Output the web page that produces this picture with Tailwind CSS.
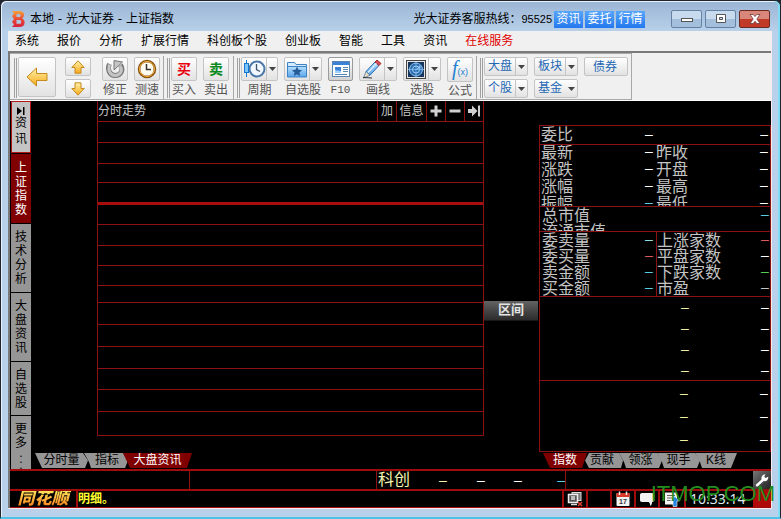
<!DOCTYPE html>
<html lang="zh-CN">
<head>
<meta charset="utf-8">
<meta name="viewport" content="width=device-width, initial-scale=1">
<title>本地 - 光大证券 - 上证指数</title>
<script src="https://cdn.jsdelivr.net/npm/@tailwindcss/browser@4"></script>
</head>
<body class="h-screen overflow-hidden bg-[#20242c] font-['Liberation_Sans','Noto_Sans_CJK_SC',sans-serif] text-xs leading-4 text-black">
<svg class="absolute h-0 w-0" aria-hidden="true">
  <defs>
    <linearGradient id="gold" x1="0" y1="0" x2="0" y2="1"><stop offset="0" stop-color="#fff2a8"/><stop offset="1" stop-color="#f7a91c"/></linearGradient>
    <linearGradient id="sky" x1="0" y1="0" x2="0" y2="1"><stop offset="0" stop-color="#b5defc"/><stop offset="1" stop-color="#5ba6ea"/></linearGradient>
    <linearGradient id="flame" x1="0" y1="0" x2="0" y2="1"><stop offset="0" stop-color="#f5a23a"/><stop offset=".5" stop-color="#ea4a35"/><stop offset="1" stop-color="#d8213e"/></linearGradient>
  </defs>
</svg>
<div class="flex h-full flex-col rounded-t-md border border-b-2 border-[#20242c] border-b-[#4fc3e6] bg-[#b9d1ea] pr-2 pb-2 pl-[7px] shadow-[inset_-2px_0_0_#7fdcf5,inset_1px_1px_0_#e8f2fb] bg-linear-to-b from-[#9ab5d4] from-0% to-[#b9d1ea] to-6%">

  <!-- Title bar -->
  <header class="flex h-[30px] shrink-0 items-center pt-1.5">
    <svg class="ml-[3px] h-4 w-3.5 shrink-0" viewBox="0 0 14 16"><path fill="url(#flame)" fill-rule="evenodd" d="M1 0h7c3 0 5 1 5 4 0 1.600-.8 2.700-2 3.400 1.600.6 2.600 2 2.600 4 0 3-2 4.600-5.600 4.600H1l2-2.500L1 11l2-3-2-3 2-2.500zM5.500 3v3H8c1 0 1.600-.5 1.600-1.500S9 3 8 3zm0 6v3.800h3c1 0 1.700-.7 1.700-1.900S9.500 9 8.500 9z"/></svg>
    <h1 class="ml-[5px] font-['DejaVu_Sans','Noto_Sans_CJK_SC',sans-serif] whitespace-nowrap">本地 - 光大证券 - 上证指数</h1>
    <p class="ml-auto whitespace-nowrap">光大证券客服热线：<span class="text-[11px]">95525</span></p>
    <nav class="ml-0.5 flex gap-0.5 text-white">
      <a href="#" class="h-[17px] w-[29px] bg-linear-to-b from-[#57a5fb] to-[#2478ee] text-center">资讯</a>
      <a href="#" class="h-[17px] w-[29px] bg-linear-to-b from-[#57a5fb] to-[#2478ee] text-center">委托</a>
      <a href="#" class="h-[17px] w-[29px] bg-linear-to-b from-[#57a5fb] to-[#2478ee] text-center">行情</a>
    </nav>
    <div class="mr-0.5 ml-[26px] flex gap-[3px]">
      <button aria-label="最小化" class="flex h-[18px] w-[31px] items-center justify-center rounded-xs border border-[#6581a3] bg-linear-to-b from-[#c8daee] from-50% to-[#a4bfdc] to-50%"><svg class="h-3 w-3" viewBox="0 0 12 12"><rect x=".5" y="5.500" width="11" height="3" fill="#fff" stroke="#555"/></svg></button>
      <button aria-label="最大化" class="flex h-[18px] w-[31px] items-center justify-center rounded-xs border border-[#6581a3] bg-linear-to-b from-[#c8daee] from-50% to-[#a4bfdc] to-50%"><svg class="h-3 w-3" viewBox="0 0 12 12"><path fill="#fff" fill-rule="evenodd" stroke="#555" d="M1.500 1.500h9v8h-9zm3 3v2h3v-2z"/></svg></button>
      <button aria-label="关闭" class="flex h-[18px] w-[31px] items-center justify-center rounded-xs border border-[#6d2a22] bg-linear-to-b from-[#d9877b] from-50% to-[#c03a27] to-50%"><svg class="h-3 w-3" viewBox="0 0 12 12"><path fill="#fff" stroke="#6d3a3a" stroke-width=".8" d="M1 1.500h3.200L6 3.600l1.800-2.100H11L7.800 6l3.200 4.500H7.800L6 8.300l-1.800 2.200H1L4.200 6z"/></svg></button>
    </div>
  </header>

  <div class="flex min-h-0 flex-1 flex-col border-r border-b border-[#fbe9ec] bg-[#f0f0f0]">
    <!-- Menu -->
    <nav class="flex h-5 shrink-0 items-center gap-[18px] pl-[7px] whitespace-nowrap">
      <a href="#">系统</a><a href="#">报价</a><a href="#">分析</a><a href="#">扩展行情</a><a href="#">科创板个股</a><a href="#">创业板</a><a href="#">智能</a><a href="#">工具</a><a href="#">资讯</a><a href="#" class="text-[#e00000]">在线服务</a>
    </nav>

    <div class="flex min-h-0 flex-1 flex-col border-t-2 border-l-2 border-[#7a7a7a]">
      <!-- Toolbar -->
      <div class="flex h-12 shrink-0 border-b border-white">
        <div class="flex border-t border-r border-b border-[#a8a8a8] pr-[3px] text-[#555]">
          <div class="mt-1 mr-px ml-1 h-10 w-[3px] border-x border-[#a0a0a0]"></div>
          <div class="flex gap-[9px] pt-[3px]">
            <button aria-label="后退" class="flex h-10 w-[38px] items-center justify-center rounded-xs border border-[#c4c4c4] bg-linear-to-b from-white to-[#e2e2e2]"><svg class="h-[22px] w-[22px]" viewBox="0 0 22 22"><path fill="url(#gold)" stroke="#c48a1e" d="M1 11 10.500 2v5.500H21v7H10.500V20z"/></svg></button>
            <div class="flex flex-col gap-[3px]">
              <button aria-label="上一个" class="flex h-[19px] w-[26px] items-center justify-center rounded-xs border border-[#c4c4c4] bg-linear-to-b from-white to-[#e2e2e2]"><svg class="h-3.5 w-3.5" viewBox="0 0 14 14"><path fill="url(#gold)" stroke="#c48a1e" d="M7 .8 13.200 7.500H10v5.700H4V7.500H.8z"/></svg></button>
              <button aria-label="下一个" class="flex h-[19px] w-[26px] items-center justify-center rounded-xs border border-[#c4c4c4] bg-linear-to-b from-white to-[#e2e2e2]"><svg class="h-3.5 w-3.5" viewBox="0 0 14 14"><path fill="url(#gold)" stroke="#c48a1e" d="M7 13.200.8 6.500H4V.8h6v5.700h3.200z"/></svg></button>
            </div>
          </div>
          <div class="ml-[11px] flex gap-1.5 pt-[3px]">
            <button class="flex w-[26px] flex-col items-center"><span class="flex h-[25px] w-full items-center justify-center rounded-xs border border-[#c4c4c4] bg-linear-to-b from-white to-[#e2e2e2]"><svg class="h-5 w-5" viewBox="0 0 20 20" fill="none"><path stroke="#777" stroke-width="5" d="M4.500 5c-2.500 5 0 11.500 5.500 11.500 6.500 0 8.500-6 5.500-10.500"/><path stroke="#c4c4c4" stroke-width="3" d="M4.700 5.500c-2.200 5 .3 11 5.300 11 6 0 8-5.500 5-9.700"/><path fill="#c4c4c4" stroke="#777" d="M9 11V1.500L17.500 3z"/></svg></span><span class="leading-[18px] whitespace-nowrap">修正</span></button>
            <button class="flex w-[26px] flex-col items-center"><span class="flex h-[25px] w-full items-center justify-center rounded-xs border border-[#c4c4c4] bg-linear-to-b from-white to-[#e2e2e2]"><svg class="h-5 w-5" viewBox="0 0 20 20" fill="none"><circle cx="10" cy="10" r="8" fill="#fffdf0" stroke="#8a5410" stroke-width="2.500"/><circle cx="10" cy="10" r="7.500" stroke="#f5b342"/><path stroke="#333" stroke-width="1.500" d="M9.500 5v5.500H14"/><path stroke="#888" d="M10 3v1M10 16v1M3 10h1M16 10h1"/></svg></span><span class="leading-[18px] whitespace-nowrap">测速</span></button>
          </div>
          <div class="mt-0.5 mr-[3px] ml-[3px] w-px bg-[#a8a8a8]"></div>
          <div class="mt-1 mr-px h-10 w-[3px] border-x border-[#a0a0a0]"></div>
          <div class="flex gap-1.5 pt-[3px]">
            <button class="flex w-[26px] flex-col items-center"><span class="flex h-[25px] w-full items-center justify-center rounded-xs border border-[#c4c4c4] bg-linear-to-b from-white to-[#e2e2e2] text-sm font-bold text-[#e8000c]">买</span><span class="leading-[18px] whitespace-nowrap">买入</span></button>
            <button class="flex w-[26px] flex-col items-center"><span class="flex h-[25px] w-full items-center justify-center rounded-xs border border-[#c4c4c4] bg-linear-to-b from-white to-[#e2e2e2] text-sm font-bold text-[#0a8a1e]">卖</span><span class="leading-[18px] whitespace-nowrap">卖出</span></button>
          </div>
          <div class="mt-0.5 mr-[3px] ml-1 w-px bg-[#a8a8a8]"></div>
          <div class="mt-1 mr-px h-10 w-[3px] border-x border-[#a0a0a0]"></div>
          <div class="flex gap-1.5 pt-[3px]">
            <button class="flex w-[37px] flex-col items-center"><span class="flex h-[25px] w-full rounded-xs border border-[#c4c4c4] bg-linear-to-b from-white to-[#e2e2e2]"><span class="flex flex-1 items-center justify-center"><svg class="h-[22px] w-6 shrink-0" viewBox="0 0 24 22" fill="none"><circle cx="15" cy="11" r="7.500" fill="#f0f7ff" stroke="#4b78a8" stroke-width="2"/><path stroke="#456" stroke-width="1.300" d="M14.500 6v5.500l3.500 2"/><path stroke="#1478d0" d="M4.500 2v17"/><rect x="2.500" y="5.500" width="4" height="9" fill="#7cc4fa" stroke="#1478d0"/></svg></span><span class="flex w-3 items-center justify-center border-l border-[#c4c4c4]"><svg class="h-1 w-[7px]" viewBox="0 0 7 4"><path fill="#444" d="M0 0h7L3.500 4z"/></svg></span></span><span class="leading-[18px] whitespace-nowrap">周期</span></button>
            <button class="flex w-[38px] flex-col items-center"><span class="flex h-[25px] w-full rounded-xs border border-[#c4c4c4] bg-linear-to-b from-white to-[#e2e2e2]"><span class="flex flex-1 items-center justify-center"><svg class="h-5 w-5 shrink-0" viewBox="0 0 20 20"><path fill="#d5ecff" stroke="#3e83c6" d="M.5 17V3.500h7l1.500 2h10.500V17z"/><path fill="url(#sky)" stroke="#3e83c6" d="M.5 7.500h19v10.500H.5z"/><path fill="#245a96" d="m10 7.500 1.500 3.300 3.600.4-2.700 2.400.8 3.500L10 15.300l-3.200 1.800.8-3.500-2.700-2.400 3.600-.4z"/></svg></span><span class="flex w-3 items-center justify-center border-l border-[#c4c4c4]"><svg class="h-1 w-[7px]" viewBox="0 0 7 4"><path fill="#444" d="M0 0h7L3.500 4z"/></svg></span></span><span class="leading-[18px] whitespace-nowrap">自选股</span></button>
            <button class="flex w-[25px] flex-col items-center"><span class="flex h-[25px] w-full items-center justify-center rounded-xs border border-[#9a9a9a] bg-linear-to-b from-white to-[#d2d2d2]"><svg class="h-4 w-[18px]" viewBox="0 0 18 16"><rect x=".5" y=".5" width="17" height="15" fill="#fff" stroke="#5b86b4"/><path fill="#3b82d6" d="M1 1h16v3H1zM3 6h6v6H3z"/><path fill="#9fd0fa" d="M3 8.500c2 2 4 0 6 2V12H3z"/><path stroke="#5b86b4" d="M11 6.500h5M11 8.500h5M11 10.500h5M3 13.500h12"/></svg></span><span class="font-['Liberation_Mono',monospace] text-[11px] leading-[18px]">F10</span></button>
            <button class="flex w-[38px] flex-col items-center"><span class="flex h-[25px] w-full rounded-xs border border-[#c4c4c4] bg-linear-to-b from-white to-[#e2e2e2]"><span class="flex flex-1 items-center justify-center"><svg class="h-5 w-5 shrink-0" viewBox="0 0 20 20"><path fill="url(#sky)" stroke="#2f6db0" d="M4 12.500 13 3l4 3.500-9 9.700z"/><path fill="#d94a50" stroke="#a52c34" d="m13 3 2-2 4 3.500-2 2z"/><path fill="#f3dcb6" stroke="#2f6db0" stroke-width=".7" d="m4 12.500 4 3.700L1.500 19z"/><path stroke="#333" d="M1 18.500 10 19"/><path stroke="#e0f2ff" stroke-width="1.200" d="m6 13.500 8.500-9"/></svg></span><span class="flex w-3 items-center justify-center border-l border-[#c4c4c4]"><svg class="h-1 w-[7px]" viewBox="0 0 7 4"><path fill="#444" d="M0 0h7L3.500 4z"/></svg></span></span><span class="leading-[18px] whitespace-nowrap">画线</span></button>
            <button class="flex w-[38px] flex-col items-center"><span class="flex h-[25px] w-full rounded-xs border border-[#c4c4c4] bg-linear-to-b from-white to-[#e2e2e2]"><span class="flex flex-1 items-center justify-center"><svg class="h-[19px] w-5 shrink-0" viewBox="0 0 20 19" fill="none"><rect x=".5" y=".5" width="19" height="18" fill="#e5e5e5" stroke="#444"/><rect x="2" y="2" width="16" height="15" fill="#16365e"/><circle cx="10" cy="9.500" r="6.500" fill="#2a6cae" stroke="#8fc4f4"/><circle cx="10" cy="9.500" r="3.500" stroke="#9fd0fa"/><path stroke="#8fc4f4" stroke-width=".7" d="M10 2v15M2 9.500h16"/><path fill="#8fc4f4" d="m10 9.500 4-4.500.8 3z"/></svg></span><span class="flex w-3 items-center justify-center border-l border-[#c4c4c4]"><svg class="h-1 w-[7px]" viewBox="0 0 7 4"><path fill="#444" d="M0 0h7L3.500 4z"/></svg></span></span><span class="leading-[18px] whitespace-nowrap">选股</span></button>
            <button class="flex w-[26px] flex-col items-center"><span class="flex h-[25px] w-full shrink-0 items-baseline justify-center rounded-xs border border-[#c4c4c4] bg-linear-to-b from-white to-[#e2e2e2] font-['Liberation_Serif',serif] text-xl leading-5 text-[#1e7fd0] italic">f<span class="font-['Liberation_Sans',sans-serif] text-[9px] leading-3 not-italic">(x)</span></span><span class="leading-[18px] whitespace-nowrap">公式</span></button>
          </div>
          <div class="mt-0.5 mr-[3px] ml-[3px] w-px bg-[#a8a8a8]"></div>
          <div class="mt-1 mr-px h-10 w-[3px] border-x border-[#a0a0a0]"></div>
          <div class="grid grid-cols-3 content-start gap-x-1.5 gap-y-[3px] pt-[3px] text-[#2468b4]">
            <button class="flex h-[19px] w-11 rounded-xs border border-[#c4c4c4] bg-linear-to-b from-white to-[#e2e2e2]"><span class="flex-1 text-center">大盘</span><span class="flex w-3 items-center justify-center self-stretch border-l border-[#c4c4c4]"><svg class="h-1 w-[7px]" viewBox="0 0 7 4"><path fill="#444" d="M0 0h7L3.500 4z"/></svg></span></button>
            <button class="flex h-[19px] w-11 rounded-xs border border-[#c4c4c4] bg-linear-to-b from-white to-[#e2e2e2]"><span class="flex-1 text-center">板块</span><span class="flex w-3 items-center justify-center self-stretch border-l border-[#c4c4c4]"><svg class="h-1 w-[7px]" viewBox="0 0 7 4"><path fill="#444" d="M0 0h7L3.500 4z"/></svg></span></button>
            <button class="h-[19px] w-11 rounded-xs border border-[#c4c4c4] bg-linear-to-b from-white to-[#e2e2e2] pr-0.5">债券</button>
            <button class="flex h-[19px] w-11 rounded-xs border border-[#c4c4c4] bg-linear-to-b from-white to-[#e2e2e2]"><span class="flex-1 text-center">个股</span><span class="flex w-3 items-center justify-center self-stretch border-l border-[#c4c4c4]"><svg class="h-1 w-[7px]" viewBox="0 0 7 4"><path fill="#444" d="M0 0h7L3.500 4z"/></svg></span></button>
            <button class="flex h-[19px] w-11 rounded-xs border border-[#c4c4c4] bg-linear-to-b from-white to-[#e2e2e2]"><span class="flex-1 text-center">基金</span><span class="flex w-3 items-center justify-center self-stretch"><svg class="h-1 w-[7px]" viewBox="0 0 7 4"><path fill="#444" d="M0 0h7L3.500 4z"/></svg></span></button>
          </div>
        </div>
      </div>

      <!-- Workspace -->
      <main class="flex min-h-0 flex-1 bg-black pl-px">
        <nav class="flex w-5 shrink-0 flex-col gap-px leading-[14px]">
          <button class="flex h-[52px] shrink-0 flex-col items-center justify-center border border-[#b01818] bg-[#c4c4c4] leading-4"><svg class="h-2 w-2" viewBox="0 0 8 8"><path d="M0 0v8l5-4zM6 0h1.500v8H6z"/></svg><span class="w-3 break-all">资讯</span></button>
          <button class="flex h-[69px] shrink-0 items-center justify-center bg-[#800000] text-white"><span class="w-3 break-all">上证指数</span></button>
          <button class="flex h-[68px] shrink-0 items-center justify-center bg-[#969696]"><span class="w-3 break-all">技术分析</span></button>
          <button class="flex h-[68px] shrink-0 items-center justify-center bg-[#969696]"><span class="w-3 break-all">大盘资讯</span></button>
          <button class="flex h-[53px] shrink-0 items-center justify-center bg-[#969696]"><span class="w-3 break-all">自选股</span></button>
          <button class="flex min-h-0 flex-1 flex-col items-center bg-[#969696] pt-1.5"><span class="w-3 break-all">更多</span><span class="flex flex-col leading-[6px]"><span>.</span><span>.</span><span>.</span></span></button>
        </nav>

        <div class="flex min-w-0 flex-1 flex-col">
          <section class="ml-[66px] flex min-h-0 flex-1 flex-col border border-t-0 border-[#8b1212]">
            <div class="flex h-[21px] shrink-0 items-stretch border-b border-[#8b1212] text-[#c8c8c8]">
              <h2 class="flex-1 leading-5">分时走势</h2>
              <button class="w-[19px] border-l border-[#8b1212]">加</button>
              <button class="w-[30px] border-l border-[#8b1212] whitespace-nowrap">信息</button>
              <button aria-label="放大" class="flex w-[19px] items-center justify-center border-l border-[#8b1212]"><svg class="h-3 w-3" viewBox="0 0 12 12"><path fill="#d0d0d0" d="M4.500.5h3v4h4v3h-4v4h-3v-4h-4v-3h4z"/></svg></button>
              <button aria-label="缩小" class="flex w-[19px] items-center justify-center border-l border-[#8b1212]"><svg class="h-3 w-3" viewBox="0 0 12 12"><path fill="#d0d0d0" d="M.5 4.500h11v3H.5z"/></svg></button>
              <button aria-label="收起" class="flex w-[19px] items-center justify-center border-l border-[#8b1212]"><svg class="h-3 w-3" viewBox="0 0 12 12"><path fill="#d0d0d0" d="M0 4h4V.5L9.500 6 4 11.500V8H0zM10 .5h2v11h-2z"/></svg></button>
            </div>
            <div class="grid flex-1 grid-rows-[21fr_21fr_20fr_22fr_20fr_21fr_20fr_21fr_17fr_22fr_22fr_22fr_22fr_22fr_23fr]">
              <div class="border-b border-[#8b1212]"></div><div class="border-b border-[#8b1212]"></div><div class="border-b border-[#8b1212]"></div><div class="border-b-3 border-[#a80e0e]"></div><div class="border-b border-[#8b1212]"></div><div class="border-b border-[#8b1212]"></div><div class="border-b border-[#8b1212]"></div><div class="border-b border-[#8b1212]"></div><div class="border-b border-[#8b1212]"></div><div class="border-b border-[#8b1212]"></div><div class="border-b border-[#8b1212]"></div><div class="border-b border-[#8b1212]"></div><div class="border-b border-[#8b1212]"></div><div class="border-b border-[#8b1212]"></div><div></div>
            </div>
          </section>
          <nav class="mt-[17px] mb-px ml-1 flex h-[15px] shrink-0 leading-[15px] whitespace-nowrap">
            <button class="w-[53px] bg-[#969696] [clip-path:polygon(0_0,48px_0,100%_50%,50px_100%,7px_100%)]">分时量</button>
            <button class="-ml-1 w-11 bg-[#969696] pl-0.5 [clip-path:polygon(0_0,39px_0,100%_50%,41px_100%,7px_100%,5px_60%)]">指标</button>
            <button class="-ml-[5px] w-[69px] bg-[#800000] text-white [clip-path:polygon(0_0,100%_0,64px_100%,7px_100%)]">大盘资讯</button>
          </nav>
        </div>

        <div class="flex w-[55px] shrink-0 flex-col pr-px">
          <div class="grow-[201]"></div>
          <button class="h-5 border-b border-[#181818] bg-linear-to-b from-[#636363] to-[#2c2c2c] text-[13px] leading-[18px] font-bold text-[#e4e4e4]">区间</button>
          <div class="grow-[149]"></div>
        </div>

        <aside class="flex w-[232px] shrink-0 flex-col pt-6">
          <div class="flex min-h-0 flex-1 flex-col border border-[#8b1212] text-base text-[#c4c4c4]">
            <dl class="flex h-[19px] shrink-0 items-center border-b border-[#8b1212] leading-4"><dt class="w-[105px] pl-px">委比</dt><dd class="pb-0.5 text-sm leading-3 text-white">–</dd><dd class="mr-0.5 ml-auto pb-0.5 text-sm leading-3 text-white">–</dd></dl>
            <dl class="grid h-[62px] shrink-0 auto-rows-[17px] grid-cols-[105px_11px_1fr_10px] overflow-hidden border-b border-[#8b1212] leading-4">
              <dt class="pl-px">最新</dt><dd class="text-sm leading-3 text-white">–</dd><dt>昨收</dt><dd class="text-sm leading-3 text-white">–</dd>
              <dt class="pl-px">涨跌</dt><dd class="text-sm leading-3 text-white">–</dd><dt>开盘</dt><dd class="text-sm leading-3 text-white">–</dd>
              <dt class="pl-px">涨幅</dt><dd class="text-sm leading-3 text-white">–</dd><dt>最高</dt><dd class="text-sm leading-3 text-white">–</dd>
              <dt class="pl-px">振幅</dt><dd class="text-sm leading-3 text-[#5ccde0]">–</dd><dt>最低</dt><dd class="text-sm leading-3 text-white">–</dd>
            </dl>
            <dl class="grid h-[25px] shrink-0 auto-rows-[16px] grid-cols-[1fr_9px] overflow-hidden border-b border-[#8b1212] pt-px leading-4"><dt class="pl-0.5">总市值</dt><dd class="text-sm leading-3 text-[#5ccde0]">–</dd><dt class="pl-0.5">流通市值</dt><dd></dd></dl>
            <div class="grid h-[65px] shrink-0 grid-cols-[117px_1fr] border-b border-[#8b1212] leading-4">
              <dl class="grid auto-rows-[16px] grid-cols-[1fr_11px] border-r border-[#8b1212] pt-px pl-0.5">
                <dt>委卖量</dt><dd class="text-sm leading-3 text-[#8ee0e0]">–</dd>
                <dt>委买量</dt><dd class="text-sm leading-3 text-[#e05a5a]">–</dd>
                <dt>卖金额</dt><dd class="text-sm leading-3 text-[#5ccde0]">–</dd>
                <dt>买金额</dt><dd class="text-sm leading-3 text-[#5ccde0]">–</dd>
              </dl>
              <dl class="grid auto-rows-[16px] grid-cols-[1fr_9px] pt-px">
                <dt>上涨家数</dt><dd class="text-sm leading-3 text-[#e05a5a]">–</dd>
                <dt>平盘家数</dt><dd class="text-sm leading-3 text-white">–</dd>
                <dt>下跌家数</dt><dd class="text-sm leading-3 text-[#50d050]">–</dd>
                <dt>市盈</dt><dd class="text-sm leading-3 text-[#c4c4c4]">–</dd>
              </dl>
            </div>
            <div class="grid min-h-0 grow-[85] basis-0 grid-cols-[1fr_80px_9px] items-center border-b border-[#8b1212] text-sm leading-3 text-white">
              <span></span><span class="text-[#f0f0a0]">–</span><span>–</span>
              <span></span><span class="text-[#f0f0a0]">–</span><span>–</span>
              <span></span><span class="text-[#f0f0a0]">–</span><span>–</span>
              <span></span><span class="text-[#f0f0a0]">–</span><span>–</span>
            </div>
            <div class="grid min-h-0 grow-[71] basis-0 grid-cols-[1fr_80px_10px] items-center text-sm leading-3 text-white">
              <span></span><span class="text-[#f0f0a0]">–</span><span>–</span>
              <span></span><span class="text-[#f0f0a0]">–</span><span>–</span>
              <span></span><span class="text-[#f0f0a0]">–</span><span>–</span>
            </div>
          </div>
          <nav class="mt-px mb-px ml-1 flex h-[15px] shrink-0 leading-[15px] whitespace-nowrap">
            <button class="w-11 bg-[#800000] text-white [clip-path:polygon(0_0,100%_0,39px_100%,7px_100%)]">指数</button>
            <button class="-ml-0.5 w-[38px] bg-[#969696] pr-1 [clip-path:polygon(4px_0,34px_0,100%_50%,36px_100%,4px_100%,0_50%)]">贡献</button>
            <button class="-ml-1 w-[43px] bg-[#969696] [clip-path:polygon(0_0,38px_0,100%_50%,40px_100%,7px_100%,5px_60%)]">领涨</button>
            <button class="-ml-[5px] w-[43px] bg-[#969696] [clip-path:polygon(0_0,38px_0,100%_50%,40px_100%,7px_100%,5px_60%)]">现手</button>
            <button class="-ml-[5px] w-[42px] bg-[#969696] [clip-path:polygon(0_0,100%_0,36px_100%,7px_100%,5px_60%)]">K线</button>
          </nav>
        </aside>
      </main>

      <!-- Status area -->
      <footer class="relative shrink-0 bg-black text-white">
        <div class="flex h-5 border-t-2 border-[#a00c0c]">
          <div class="w-[179px]"></div>
          <div class="w-[187px] border-l border-[#8b1212]"></div>
          <div class="flex w-[190px] items-center border-x border-[#8b1212] pl-px text-base leading-4 text-[#f4f4b0]"><span class="w-[61px]">科创</span><span class="w-[38px] text-sm leading-4">–</span><span class="w-[37px] text-sm leading-4 text-white">–</span><span class="flex-1 text-sm leading-4 text-white">–</span><span class="text-sm leading-4 text-[#5ccde0]">–</span></div>
          <div class="flex-1"></div>
          <button aria-label="设置" class="flex w-[18px] items-center justify-center bg-linear-to-br from-[#777] to-[#222]"><svg class="h-3.5 w-3.5" viewBox="0 0 14 14"><path fill="#fff" d="M1 11.500 6.500 6.500C6 4 7.500 1.200 10.500 1.200L9.200 3.500l1.300 1.400 2.800-1.200c.3 3-2 5-4.600 4.400L3 13.200c-1.300.8-2.800-.6-2-1.700z"/></svg></button>
        </div>
        <div class="flex h-[19px] border-t-2 border-b border-[#a00c0c]">
          <div class="flex w-[66px] justify-center bg-linear-to-b from-[#ffe45a] to-[#ff7a10] bg-clip-text text-[17px] leading-4 font-black text-transparent italic">同花顺</div>
          <div class="flex-1 overflow-hidden border-l-2 border-[#a00c0c] leading-4 font-bold text-[#ffff30]">明细。</div>
          <div class="flex divide-x-2 divide-[#a00c0c] border-x-2 border-[#a00c0c]">
            <span class="flex w-[24px] items-center justify-center"><svg class="h-4 w-4" viewBox="0 0 16 16" fill="none"><rect x="5" y="1.500" width="9" height="8" fill="#777" stroke="#ddd"/><rect x="1.500" y="3.500" width="9" height="8" fill="#555" stroke="#eee" stroke-width="1.500"/><path stroke="#ddd" stroke-width="1.500" d="M4 13.500h6M4 6h4M4 8h4"/><path stroke="#e04030" stroke-width="1.500" d="m11 11 4 4m0-4-4 4"/></svg></span>
            <span class="w-[24px]"></span>
            <button aria-label="日历" class="flex w-[24px] items-center justify-center"><svg class="h-4 w-3.5" viewBox="0 0 14 16"><rect x=".5" y="2" width="13" height="13" rx="1" fill="#f4f4f4"/><path fill="#d83a2a" d="M.5 2h13v4H.5z"/><path stroke="#eee" stroke-width="1.500" d="M3.500.5V4M10.500.5V4"/><text x="7" y="13" text-anchor="middle" font-family="Liberation Sans" font-size="7" font-weight="bold" fill="#333">17</text></svg></button>
            <button aria-label="消息" class="flex w-[24px] items-center justify-center"><svg class="h-4 w-4" viewBox="0 0 16 16"><path fill="#f2f2f2" d="M3 2h10c1.500 0 2 1 2 2v5c0 1-.5 2-2 2 .2 1.700-.5 3-1.800 4 .2-1.500-.3-3-1.700-4H3C1.500 11 1 10 1 9V4c0-1 .5-2 2-2z"/></svg></button>
            <button aria-label="上传" class="flex w-[24px] items-center justify-center"><svg class="h-4 w-4" viewBox="0 0 16 16"><path fill="#f4f4f4" d="M1 1.500h12v12H1z"/><path stroke="#666" d="M3 4.500h8M3 7h5M3 9.500h4"/><path fill="#2484e0" stroke="#fff" stroke-width=".6" d="M11 5.500 15.500 10H13v5.500H9V10H6.500z"/></svg></button>
          </div>
          <time class="w-[67px] pl-1 font-['Noto_Sans',sans-serif] text-sm leading-4 text-[#dfe8f0]">10:33.14</time>
          <div class="w-[18px] bg-[#b00808]"></div>
        </div>
        <p class="pointer-events-none absolute -right-1 bottom-1 text-[22px] leading-5 text-[#238c1e]">ITMOP.COM</p>
      </footer>
    </div>
  </div>
</div>
</body>
</html>
